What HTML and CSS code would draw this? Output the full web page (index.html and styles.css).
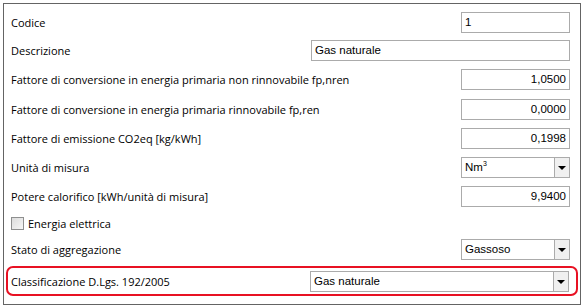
FILE: index.html
```html
<!DOCTYPE html>
<html lang="it">

<head>
  <meta charset="UTF-8" />
  <meta name="viewport" content="width=device-width, initial-scale=1.0" />
  <title>Combustibile</title>
  <link rel="stylesheet" href="styles.css">
</head>

<body>
  <div class="panel">
    <div class="row row-first">
      <span class="label">Codice</span>
      <div class="field small">1</div>
    </div>

    <div class="row">
      <span class="label">Descrizione</span>
      <div class="field wide">Gas naturale</div>
    </div>

    <div class="row">
      <span class="label">Fattore di conversione in energia primaria non rinnovabile fp,nren</span>
      <div class="field small num">1,0500</div>
    </div>

    <div class="row row-tall">
      <span class="label">Fattore di conversione in energia primaria rinnovabile fp,ren</span>
      <div class="field small num">0,0000</div>
    </div>

    <div class="row">
      <span class="label">Fattore di emissione CO2eq [kg/kWh]</span>
      <div class="field small num">0,1998</div>
    </div>

    <div class="row">
      <span class="label">Unità di misura</span>
      <div class="field small combo">
        <span class="combo-text">Nm<sup>3</sup></span>
        <span class="combo-btn"></span>
      </div>
    </div>

    <div class="row">
      <span class="label">Potere calorifico [kWh/unità di misura]</span>
      <div class="field small num">9,9400</div>
    </div>

    <label class="row row-check">
      <span class="checkbox"></span>
      <span class="label">Energia elettrica</span>
    </label>

    <div class="row">
      <span class="label">Stato di aggregazione</span>
      <div class="field small combo">
        <span class="combo-text">Gassoso</span>
        <span class="combo-btn"></span>
      </div>
    </div>

    <div class="row highlight">
      <span class="label">Classificazione D.Lgs. 192/2005</span>
      <div class="field wide combo">
        <span class="combo-text">Gas naturale</span>
        <span class="combo-btn"></span>
      </div>
    </div>
  </div>
</body>

</html>
```

FILE: styles.css
```css
body {
  margin: 3px;
  background: #fff;
  font-family: 'Open Sans', 'Liberation Sans', sans-serif;
  font-size: 11px;
  color: #000;
}

.panel {
  width: 576px;
  height: 296px;
  border: 1px solid #646464;
  padding-top: 4px;
  box-sizing: content-box;
}

.row {
  display: flex;
  align-items: center;
  justify-content: space-between;
  height: 29px;
  padding: 0 10px 0 7px;
}

.row-first {
  height: 28px;
}

.row-tall {
  height: 30px;
}

.label {
  white-space: nowrap;
}

.field {
  box-sizing: border-box;
  height: 21px;
  border: 1px solid #ababab;
  background: #fff;
  font-family: 'Liberation Sans', sans-serif;
  font-size: 11.5px;
  line-height: 19px;
  padding: 0 3px;
}

.field.small {
  width: 109px;
}

.field.wide {
  width: 259px;
}

.field.num {
  text-align: right;
}

.combo {
  display: flex;
  padding: 0 0 0 3px;
}

.combo-text {
  flex: 1;
}

.combo-text sup {
  font-size: 7px;
  vertical-align: 5px;
  line-height: 0;
}

.combo-btn {
  width: 14px;
  border-left: 1px solid #ababab;
  background: #f0f0f0;
  position: relative;
}

.combo-btn::after {
  content: "";
  position: absolute;
  left: 3px;
  top: 8px;
  border-left: 4px solid transparent;
  border-right: 4px solid transparent;
  border-top: 4px solid #000;
}

.row-check {
  height: 24px;
  justify-content: flex-start;
  gap: 4px;
}

.checkbox {
  box-sizing: border-box;
  width: 13px;
  height: 13px;
  border: 1px solid #8e8f8f;
  background: linear-gradient(135deg, #dcdcdc, #f6f6f6);
  margin-left: 0px;
}

.highlight {
  margin: 2px 2px 0 2px;
  height: 26px;
  border: 2px solid #e81123;
  border-radius: 7px;
  padding: 0 7px 0 3px;
}
```
